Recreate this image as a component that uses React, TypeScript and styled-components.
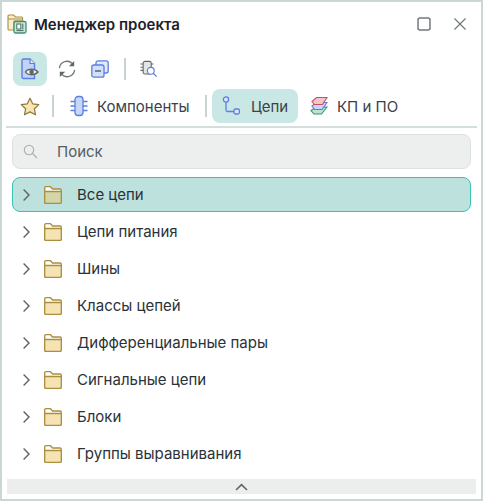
import React from "react";
import styled, { createGlobalStyle } from "styled-components";

const Global = createGlobalStyle`
  html, body { margin: 0; padding: 0; background: #fff; }
  * { box-sizing: border-box; }
`;

const Win = styled.div`
  width: 483px; height: 501px; background: #fff;
  border: 2px solid #c9d8d6;
  font-family: Inter, "Noto Sans", sans-serif; color: #2a3238;
  display: flex; flex-direction: column; overflow: hidden;
`;
const TitleBar = styled.div`
  height: 44px; flex: none; display: flex; align-items: center;
  padding: 0 14px 0 5px;
`;
const Title = styled.div`
  margin-left: 7px; font-size: 15px; font-weight: 600; color: #1c2228; flex: 1;
`;
const WinButton = styled.div`
  width: 14px; height: 14px; margin-left: 22px; display: flex;
`;
const Toolbar = styled.div`
  height: 34px; margin-top: 6px; flex: none; display: flex; align-items: center; padding-left: 11px;
`;
const IconButton = styled.div<{ $active?: boolean; $w?: number; $ml?: number }>`
  width: ${p => p.$w ?? 34}px; height: 34px; flex: none; border-radius: 8px; display: flex; align-items: center; justify-content: center;
  margin-left: ${p => p.$ml ?? 0}px;
  background: ${p => (p.$active ? "#c9e8e5" : "transparent")};
`;
const Sep = styled.div<{ $ml: number; $mr: number; $mt?: number }>`
  width: 2px; height: 22px; background: #c8d3d2; flex: none;
  margin-top: ${p => p.$mt ?? 0}px;
  margin-left: ${p => p.$ml}px; margin-right: ${p => p.$mr}px;
`;
const TabsRow = styled.div`
  height: 39px; margin: 3px 4px 0; flex: none; display: flex; align-items: flex-start; padding-left: 13px;
  border-bottom: 2px solid #d4dedd;
`;
const Tab = styled.div<{ $active?: boolean; $w: number; $pl: number; $ml?: number }>`
  height: 34px; width: ${p => p.$w}px; flex: none; border-radius: 8px; display: flex; align-items: center;
  padding-left: ${p => p.$pl}px; gap: 9px; margin-left: ${p => p.$ml ?? 0}px;
  background: ${p => (p.$active ? "#c9e8e5" : "transparent")};
  font-size: 15px; color: #3a4248;
`;
const StarBox = styled.div`
  width: 22px; height: 34px; display: flex; align-items: center; justify-content: center; flex: none;
`;
const Search = styled.div`
  height: 35px; margin: 6px 10px 0; flex: none; background: #ecefee; border: 1px solid #dde2e1; border-radius: 8px;
  display: flex; align-items: center; padding-left: 10px; gap: 19px; font-size: 15px; color: #555d63;
`;
const Tree = styled.div`
  flex: 1; padding: 8px 10px 0; display: flex; flex-direction: column; gap: 2px;
`;
const Row = styled.div<{ $selected?: boolean }>`
  height: 35px; flex: none; display: flex; align-items: center; padding-left: 9px;
  border-radius: 8px; border: 1px solid ${p => (p.$selected ? "#3fc0b4" : "transparent")};
  background: ${p => (p.$selected ? "#bde1dd" : "transparent")};
  font-size: 15px; color: #2a3238;
`;
const Label = styled.span`
  margin-left: 15px;
`;
const FolderBox = styled.div`
  margin-left: 13px; display: flex;
`;
const Collapse = styled.div`
  height: 15px; margin: 0 5px 5px; flex: none; background: #ebeeed; display: flex; align-items: center; justify-content: center;
`;

const Chevron = () => (
  <svg width="9" height="14" viewBox="0 0 9 14" fill="none">
    <path d="M1.6 1.6 L7 7 L1.6 12.4" stroke="#5c6468" strokeWidth="1.4" />
  </svg>
);
const Folder = ({ selected }: { selected?: boolean }) => (
  <svg width="18" height="18" viewBox="0 0 18 18" fill="none">
    <path d="M0.7 16V2C0.7 1.2 1.2 0.7 2 0.7H6.5L8.5 3H16C16.8 3 17.3 3.5 17.3 4.2V16C17.3 16.8 16.8 17.3 16 17.3H2C1.2 17.3 0.7 16.8 0.7 16Z"
      fill="#fff" stroke="#a98f3e" strokeWidth="1.3" />
    <path d="M0.7 5.5H17.3V16C17.3 16.8 16.8 17.3 16 17.3H2C1.2 17.3 0.7 16.8 0.7 16Z" fill={selected ? "#d3d6a8" : "#f6e3b4"} stroke="#a98f3e" strokeWidth="1.3" />
  </svg>
);
const names = ["Цепи питания", "Шины", "Классы цепей", "Дифференциальные пары", "Сигнальные цепи", "Блоки", "Группы выравнивания"];

export default function App() {
  return (
    <Win>
      <Global />
      <TitleBar>
        <svg width="20" height="20" viewBox="0 0 20 20" fill="none">
          <path d="M1 14V2C1 1.4 1.4 1 2 1H6.5L8.5 3H14.5C15.2 3 15.6 3.4 15.6 4V7H7V16H2C1.4 16 1 15.6 1 15Z" fill="#fbeecb" stroke="#a98f3e" strokeWidth="1.1" />
          <path d="M1 5H15" stroke="#a98f3e" strokeWidth="1" />
          <rect x="7" y="7.5" width="12" height="11.5" rx="1.5" fill="#cfe6da" stroke="#3f9070" strokeWidth="1.3" />
          <rect x="9.8" y="10" width="4" height="5" fill="#fff" stroke="#3f6f60" strokeWidth="1" />
          <path d="M15.8 9.8V15.5M9.5 16.6H16.5" stroke="#3f6f60" strokeWidth="1" />
        </svg>
        <Title>Менеджер проекта</Title>
        <WinButton>
          <svg width="14" height="14" viewBox="0 0 14 14" fill="none">
            <rect x="1" y="1" width="12" height="12" rx="2" stroke="#70787c" strokeWidth="1.5" />
          </svg>
        </WinButton>
        <WinButton>
          <svg width="14" height="14" viewBox="0 0 14 14" fill="none">
            <path d="M1.5 1.5L12.5 12.5M12.5 1.5L1.5 12.5" stroke="#70787c" strokeWidth="1.2" />
          </svg>
        </WinButton>
      </TitleBar>
      <Toolbar>
        <IconButton $active>
          <svg width="18" height="22" viewBox="0 0 18 22" fill="none">
            <path d="M2.5 1H9L13.5 5.5V20.5H2.5C1.6 20.5 1 19.9 1 19V2.5C1 1.6 1.6 1 2.5 1Z" fill="#c3d3f5" stroke="#5a7fe0" strokeWidth="1.4" />
            <path d="M9 1V5.5H13.5" stroke="#5a7fe0" strokeWidth="1.2" fill="#e8eefb" />
            <path d="M4.5 14C6.5 10.4 14 10.4 17 14C14 17.6 6.5 17.6 4.5 14Z" fill="#eef3f3" stroke="#5e686c" strokeWidth="1.4" />
            <circle cx="10.6" cy="14" r="2.3" fill="#5e686c" />
          </svg>
        </IconButton>
        <IconButton $ml={3}>
          <svg width="18" height="18" viewBox="0 0 20 20" fill="none">
            <path d="M1.5 9A8.5 8.5 0 0 1 15.8 3.8" stroke="#6c7478" strokeWidth="1.4" />
            <path d="M18.5 11A8.5 8.5 0 0 1 4.2 16.2" stroke="#6c7478" strokeWidth="1.4" />
            <path d="M18 1V7H12Z" fill="#5e686c" />
            <path d="M2 19V13H8Z" fill="#5e686c" />
          </svg>
        </IconButton>
        <IconButton $w={32}>
          <svg width="18" height="18" viewBox="0 0 18 18" fill="none">
            <rect x="5" y="0.8" width="12.2" height="12.2" rx="2" fill="#e3eafb" stroke="#5a7fe0" strokeWidth="1.3" />
            <rect x="0.8" y="5" width="12.2" height="12.2" rx="2" fill="#d2defa" stroke="#5a7fe0" strokeWidth="1.3" />
            <path d="M4 11H10" stroke="#4a6060" strokeWidth="1.4" />
          </svg>
        </IconButton>
        <Sep $ml={8} $mr={6} />
        <IconButton>
          <svg width="18" height="18" viewBox="0 0 20 20" fill="none">
            <rect x="3.5" y="1.5" width="9" height="14" rx="2" fill="#e2e5e5" stroke="#5e686c" strokeWidth="1.2" />
            <path d="M0.5 4.5H3.5M0.5 8H3.5M0.5 11.5H3.5M12.5 4.5H15" stroke="#5e686c" strokeWidth="1.2" />
            <circle cx="12" cy="12" r="3.8" fill="#fff" stroke="#5a7fe0" strokeWidth="1.3" />
            <path d="M14.7 14.7L18.5 18.5" stroke="#5a7fe0" strokeWidth="1.4" />
          </svg>
        </IconButton>
      </Toolbar>
      <TabsRow>
        <StarBox>
          <svg width="20" height="19" viewBox="0 0 20 19" fill="none">
            <path d="M10 1.2L12.7 6.8L18.8 7.6L14.4 11.8L15.5 17.8L10 14.9L4.5 17.8L5.6 11.8L1.2 7.6L7.3 6.8Z" fill="#f7e5b6" stroke="#8d7a3c" strokeWidth="1.2" strokeLinejoin="round" />
          </svg>
        </StarBox>
        <Sep $ml={11} $mr={0} $mt={6} />
        <Tab $w={151} $pl={16}>
          <svg width="18" height="22" viewBox="0 0 18 22" fill="none">
            <rect x="5" y="1.5" width="8" height="19" rx="3" fill="#c8d6fa" stroke="#5a7fe0" strokeWidth="1.3" />
            <path d="M0.5 6.5H5M0.5 11H5M0.5 15.5H5M13 6.5H17.5M13 11H17.5M13 15.5H17.5" stroke="#5a7fe0" strokeWidth="1.3" />
          </svg>
          Компоненты
        </Tab>
        <Sep $ml={0} $mr={5} $mt={6} />
        <Tab $active $w={86} $pl={10}>
          <svg width="20" height="20" viewBox="0 0 20 20" fill="none">
            <circle cx="4" cy="3.5" r="2.6" fill="#dce6fb" stroke="#5a7fe0" strokeWidth="1.3" />
            <path d="M4 6V14C4 15 4.8 15.5 5.5 15.5H12" stroke="#5a7fe0" strokeWidth="1.3" />
            <rect x="12" y="13" width="5.4" height="5" rx="1.5" fill="#dce6fb" stroke="#5a7fe0" strokeWidth="1.3" />
          </svg>
          Цепи
        </Tab>
        <Tab $w={100} $pl={0} $ml={12}>
          <svg width="18" height="20" viewBox="0 0 18 20" fill="none">
            <path d="M1 14.5L6.5 11H17L11.5 18H4Z" fill="#bfe3cd" stroke="#3f9070" strokeWidth="1.1" />
            <path d="M2 10L6.5 6.5H17L12 13.5H4.5Z" fill="#c8d6fa" stroke="#5a7fe0" strokeWidth="1.1" />
            <path d="M2 5.5L6.5 1.5H17L12.5 8.5H4.5Z" fill="#f5c5cb" stroke="#c4525f" strokeWidth="1.1" />
          </svg>
          КП и ПО
        </Tab>
      </TabsRow>
      <Search>
        <svg width="15" height="15" viewBox="0 0 15 15" fill="none">
          <circle cx="6" cy="6" r="4.7" stroke="#a8afb1" strokeWidth="1.1" />
          <path d="M9.5 9.5L14 14" stroke="#a8afb1" strokeWidth="1.1" />
        </svg>
        Поиск
      </Search>
      <Tree>
        <Row $selected>
          <Chevron />
          <FolderBox><Folder selected /></FolderBox>
          <Label>Все цепи</Label>
        </Row>
        {names.map(n => (
          <Row key={n}>
            <Chevron />
            <FolderBox><Folder /></FolderBox>
            <Label>{n}</Label>
          </Row>
        ))}
      </Tree>
      <Collapse>
        <svg width="13" height="8" viewBox="0 0 13 8" fill="none">
          <path d="M1 7L6.5 1.6L12 7" stroke="#5c6468" strokeWidth="1.5" />
        </svg>
      </Collapse>
    </Win>
  );
}
